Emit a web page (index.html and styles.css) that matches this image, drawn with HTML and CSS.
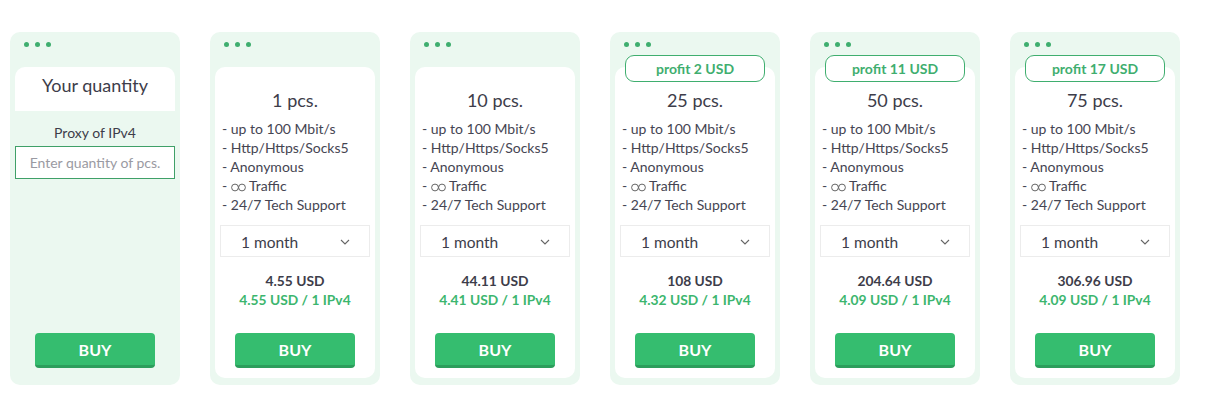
FILE: index.html
```html
<!DOCTYPE html>
<html>
<head>
<meta charset="utf-8">
<link rel="stylesheet" href="styles.css">
</head>
<body>
<div class="row">
  <div class="card">
    <div class="dots"><i></i><i></i><i></i></div>
    <div class="qty-head">Your quantity</div>
    <div class="qty-label">Proxy of IPv4</div>
    <input class="qty-input" type="text" placeholder="Enter quantity of pcs.">
    <div class="btn-wrap"><button class="buy">BUY</button></div>
  </div>

  <div class="card">
    <div class="dots"><i></i><i></i><i></i></div>
    <div class="inner">
      <div class="title">1 pcs.</div>
      <ul class="features"><li>- up to 100 Mbit/s</li><li>- Http/Https/Socks5</li><li>- Anonymous</li><li>- <svg class="inf" width="15" height="9" viewBox="0 0 15 9"><circle cx="4" cy="4.5" r="3.4" fill="none" stroke="#555" stroke-width="0.9"/><circle cx="11" cy="4.5" r="3.4" fill="none" stroke="#555" stroke-width="0.9"/></svg> Traffic</li><li>- 24/7 Tech Support</li></ul>
      <div class="select"><span>1 month</span><svg width="10" height="6" viewBox="0 0 10 6"><polyline points="1,1 5,5 9,1" fill="none" stroke="#666" stroke-width="1.1"/></svg></div>
      <div class="price">4.55 USD</div>
      <div class="per">4.55 USD / 1 IPv4</div>
      <button class="buy">BUY</button>
    </div>
  </div>

  <div class="card">
    <div class="dots"><i></i><i></i><i></i></div>
    <div class="inner">
      <div class="title">10 pcs.</div>
      <ul class="features"><li>- up to 100 Mbit/s</li><li>- Http/Https/Socks5</li><li>- Anonymous</li><li>- <svg class="inf" width="15" height="9" viewBox="0 0 15 9"><circle cx="4" cy="4.5" r="3.4" fill="none" stroke="#555" stroke-width="0.9"/><circle cx="11" cy="4.5" r="3.4" fill="none" stroke="#555" stroke-width="0.9"/></svg> Traffic</li><li>- 24/7 Tech Support</li></ul>
      <div class="select"><span>1 month</span><svg width="10" height="6" viewBox="0 0 10 6"><polyline points="1,1 5,5 9,1" fill="none" stroke="#666" stroke-width="1.1"/></svg></div>
      <div class="price">44.11 USD</div>
      <div class="per">4.41 USD / 1 IPv4</div>
      <button class="buy">BUY</button>
    </div>
  </div>

  <div class="card">
    <div class="dots"><i></i><i></i><i></i></div>
    <div class="badge">profit 2 USD</div>
    <div class="inner">
      <div class="title">25 pcs.</div>
      <ul class="features"><li>- up to 100 Mbit/s</li><li>- Http/Https/Socks5</li><li>- Anonymous</li><li>- <svg class="inf" width="15" height="9" viewBox="0 0 15 9"><circle cx="4" cy="4.5" r="3.4" fill="none" stroke="#555" stroke-width="0.9"/><circle cx="11" cy="4.5" r="3.4" fill="none" stroke="#555" stroke-width="0.9"/></svg> Traffic</li><li>- 24/7 Tech Support</li></ul>
      <div class="select"><span>1 month</span><svg width="10" height="6" viewBox="0 0 10 6"><polyline points="1,1 5,5 9,1" fill="none" stroke="#666" stroke-width="1.1"/></svg></div>
      <div class="price">108 USD</div>
      <div class="per">4.32 USD / 1 IPv4</div>
      <button class="buy">BUY</button>
    </div>
  </div>

  <div class="card">
    <div class="dots"><i></i><i></i><i></i></div>
    <div class="badge">profit 11 USD</div>
    <div class="inner">
      <div class="title">50 pcs.</div>
      <ul class="features"><li>- up to 100 Mbit/s</li><li>- Http/Https/Socks5</li><li>- Anonymous</li><li>- <svg class="inf" width="15" height="9" viewBox="0 0 15 9"><circle cx="4" cy="4.5" r="3.4" fill="none" stroke="#555" stroke-width="0.9"/><circle cx="11" cy="4.5" r="3.4" fill="none" stroke="#555" stroke-width="0.9"/></svg> Traffic</li><li>- 24/7 Tech Support</li></ul>
      <div class="select"><span>1 month</span><svg width="10" height="6" viewBox="0 0 10 6"><polyline points="1,1 5,5 9,1" fill="none" stroke="#666" stroke-width="1.1"/></svg></div>
      <div class="price">204.64 USD</div>
      <div class="per">4.09 USD / 1 IPv4</div>
      <button class="buy">BUY</button>
    </div>
  </div>

  <div class="card">
    <div class="dots"><i></i><i></i><i></i></div>
    <div class="badge">profit 17 USD</div>
    <div class="inner">
      <div class="title">75 pcs.</div>
      <ul class="features"><li>- up to 100 Mbit/s</li><li>- Http/Https/Socks5</li><li>- Anonymous</li><li>- <svg class="inf" width="15" height="9" viewBox="0 0 15 9"><circle cx="4" cy="4.5" r="3.4" fill="none" stroke="#555" stroke-width="0.9"/><circle cx="11" cy="4.5" r="3.4" fill="none" stroke="#555" stroke-width="0.9"/></svg> Traffic</li><li>- 24/7 Tech Support</li></ul>
      <div class="select"><span>1 month</span><svg width="10" height="6" viewBox="0 0 10 6"><polyline points="1,1 5,5 9,1" fill="none" stroke="#666" stroke-width="1.1"/></svg></div>
      <div class="price">306.96 USD</div>
      <div class="per">4.09 USD / 1 IPv4</div>
      <button class="buy">BUY</button>
    </div>
  </div>
</div>
</body>
</html>
```

FILE: styles.css
```css
* { box-sizing: border-box; }
html, body { margin: 0; padding: 0; background: #ffffff; }
body { font-family: Lato, "Open Sans", sans-serif; color: #3d3d4a; }

.row {
  display: flex;
  gap: 30px;
  padding: 32px 0 0 10px;
}

.card {
  position: relative;
  width: 170px;
  height: 353px;
  background: #ebf8f0;
  border-radius: 10px;
  padding: 0 5px 7px 5px;
  display: flex;
  flex-direction: column;
}

.dots {
  display: flex;
  gap: 6px;
  height: 35px;
  padding: 10px 0 0 9px;
}
.dots i {
  display: block;
  width: 5px;
  height: 5px;
  border-radius: 50%;
  background: #3fae6f;
}

.badge {
  position: absolute;
  left: 15px;
  top: 23px;
  width: 140px;
  height: 27px;
  border: 1px solid #3fae6f;
  border-radius: 9px;
  background: #fff;
  color: #3fae6f;
  font-weight: 700;
  font-size: 14px;
  line-height: 25px;
  text-align: center;
  z-index: 1;
}

.inner {
  flex: 1;
  background: #fff;
  border-radius: 10px;
  display: flex;
  flex-direction: column;
  align-items: center;
  padding: 22px 5px 10px 5px;
}

.title {
  font-size: 18px;
  line-height: 22px;
  color: #3d3d4a;
}

.features {
  list-style: none;
  margin: 8px 0 0 0;
  padding: 0 0 0 2px;
  align-self: stretch;
  font-size: 14px;
  line-height: 19px;
  color: #454552;
}
.inf { vertical-align: -1px; }

.select {
  align-self: stretch;
  margin-top: 11px;
  height: 32px;
  border: 1px solid #ececec;
  display: flex;
  align-items: center;
  justify-content: space-between;
  padding: 1px 19px 0 20px;
  font-size: 15.5px;
  color: #3d3d4a;
}

.price {
  margin-top: 14px;
  font-size: 13.8px;
  line-height: 19px;
  font-weight: 700;
  color: #3d3d4a;
}
.per {
  font-size: 13.8px;
  line-height: 19px;
  font-weight: 700;
  color: #3cb66e;
}

.buy {
  margin-top: auto;
  width: 120px;
  height: 35px;
  border: 0;
  border-bottom: 3px solid #2c9e5c;
  border-radius: 4px;
  background: #35bd6f;
  color: #fff;
  font-family: Lato, sans-serif;
  font-size: 16px;
  font-weight: 700;
  padding: 0;
  cursor: pointer;
}

.qty-head {
  height: 44px;
  background: #fff;
  border-radius: 10px 10px 0 0;
  font-size: 18px;
  line-height: 36px;
  text-align: center;
  color: #3d3d4a;
}
.qty-label {
  margin-top: 13px;
  font-size: 14px;
  line-height: 18px;
  text-align: center;
  color: #3d3d4a;
}
.qty-input {
  margin-top: 4px;
  width: 160px;
  height: 33px;
  border: 1px solid #3fa068;
  background: #fff;
  font-family: Lato, sans-serif;
  font-size: 14px;
  text-align: center;
  padding: 0;
  outline: none;
}
.qty-input::placeholder { color: #9a9aa2; }

.btn-wrap {
  margin-top: auto;
  display: flex;
  justify-content: center;
  padding-bottom: 10px;
}
.btn-wrap .buy { margin-top: 0; }
```
